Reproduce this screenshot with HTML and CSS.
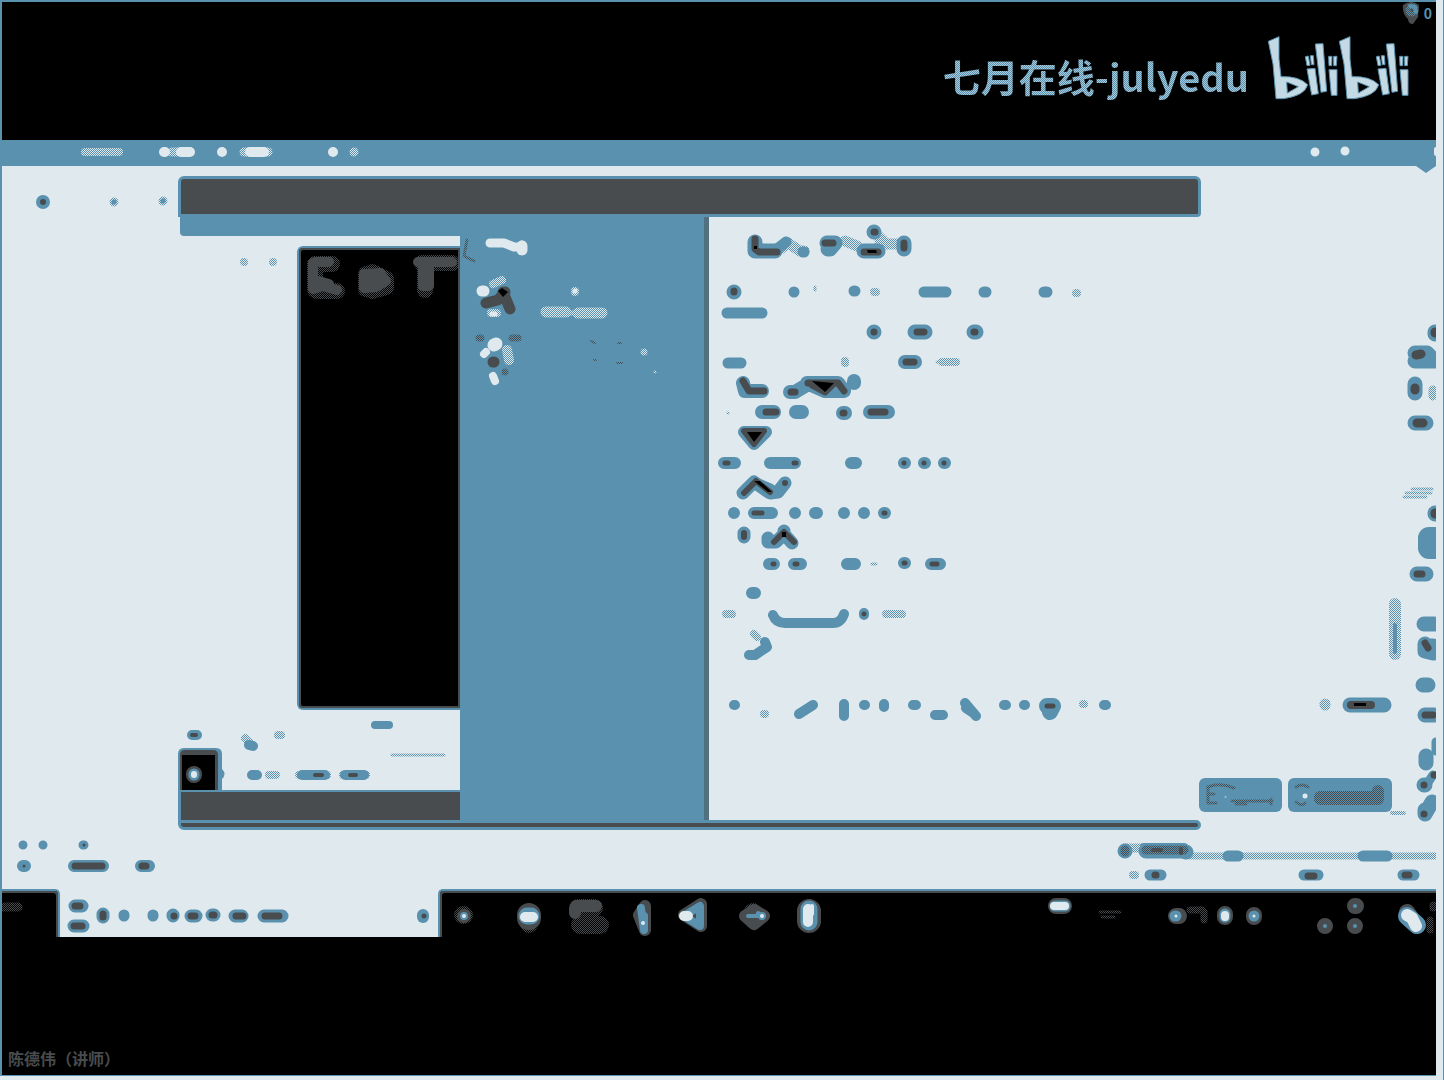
FILE: index.html
```html
<!DOCTYPE html>
<html lang="zh-CN">
<head>
<meta charset="utf-8">
<title>七月在线-julyedu</title>
<link rel="stylesheet" href="styles.css">
</head>
<body>
<svg class="defs" aria-hidden="true">
  <defs>
    <pattern id="dots" width="2" height="2" patternUnits="userSpaceOnUse"><path class="px-blue" d="M0 0h1v1h-1zM1 1h1v1h-1z"/></pattern>
    <pattern id="dots-light" width="2" height="2" patternUnits="userSpaceOnUse"><path class="px-light" d="M0 0h1v1h-1zM1 1h1v1h-1z"/></pattern>
    <pattern id="dots-dark" width="2" height="2" patternUnits="userSpaceOnUse"><path class="px-dark" d="M0 0h1v1h-1zM1 1h1v1h-1z"/></pattern>
  </defs>
</svg>
<div class="frame">
  <header class="header">
    <div class="counter">
      <svg width="18" height="26" viewBox="1400 0 18 26"><path class="fill-dark" d="M1401 5q8-6 16 0l-1 12-5 7q-5 0-5-5-6-5-5-14z"/><circle class="faint" cx="1410" cy="10" r="4" stroke-width="5"/><path class="blue" stroke-width="4" d="M1408 6l5 1 1 5"/></svg>
      <span>0</span>
    </div>
    <div class="brand">
      <h1 class="channel">七月在线-julyedu</h1>
      <svg class="logo" width="147" height="70" viewBox="1020 100 441 210" fill-rule="evenodd">
        <g id="bili">
          <path d="M1030 122L1062 108V175L1068 228Q1122 226 1148 252Q1140 285 1075 294H1053L1044 190ZM1085 244L1087 277L1120 258Z"/>
          <path d="M1146 205L1170 203L1180 279L1160 283ZM1141 168l9-2 5 28-9 1zM1156 165h9l2 27h-8zM1171 130L1194 129L1205 272L1188 275ZM1212 207H1236V284H1219ZM1211 167h10l-1 28h-8zM1226 167h10l-2 28h-8z"/>
        </g>
        <use href="#bili" x="213"/>
      </svg>
    </div>
  </header>

  <nav class="menubar">
    <svg width="300" height="26" viewBox="70 140 300 26">
      <g class="faint-light" stroke-width="8"><path d="M85 152h34"/></g>
      <g class="light" stroke-width="10"><path d="M164 152h1M181 152h9M222 152h0M250 152h14M333 152h0"/></g>
      <g class="faint-light" stroke-width="9"><path d="M172 152h6M354 152h0M244 152h24"/></g>
    </svg>
    <svg width="126" height="26" viewBox="1310 140 126 26">
      <g class="light" stroke-width="9"><path d="M1315 152h0M1345 151h0"/></g><path class="light" stroke-width="4" d="M1436 149v5"/>
      <path class="fill-blue" d="M1416 166h20l-10 7z"/>
    </svg>
  </nav>

  <main class="stage">
    <aside class="gutter">
      <svg width="176" height="60" viewBox="2 176 176 60">
        <path class="blue" stroke-width="14" d="M43 202h0"/><path class="dark" stroke-width="6" d="M43 202h0"/>
        <path class="faint" stroke-width="9" d="M114 202h0M163 201h0"/><path class="blue" stroke-width="5" d="M114 202h0M163 201h0"/>
      </svg>
      <svg width="176" height="59" viewBox="2 830 176 59">
        <g class="blue" stroke-width="9"><path d="M23 845h0M43 845h0M83 845h1"/></g>
        <g class="blue" stroke-width="12"><path d="M23 866h2M74 866h29M141 866h8"/></g>
        <g class="dark" stroke-width="7"><path d="M75 866h27M142 866h4"/></g><g class="dark" stroke-width="3"><path d="M24 866h0M84 845h0"/></g>
      </svg>
    </aside>

    <section class="window">
      <div class="titlebar"></div>
      <div class="panes">
        <div class="pane-left">
          <div class="band"></div>
          <div class="preview-row">
            <svg width="50" height="24" viewBox="230 246 50 24"><path class="faint" stroke-width="8" d="M244 262h0M273 262h0"/></svg>
            <div class="preview">
              <svg width="156" height="56" viewBox="303 250 156 56">
                <g class="faint-dark" stroke-width="16"><path d="M317 264v26M320 264h14M319 291h20M368 274v15M374 272l14 7v8l-14 4M427 266v24M424 263h30"/></g>
                <g class="dark" stroke-width="10"><path d="M315 263v26l10-3 14 4M317 262h14M317 280l14 4M366 274v14l12-1 10-6-6-8-14 1M367 281h16M425 266v20h6v-18M420 262h34"/></g>
              </svg>
            </div>
          </div>
          <svg class="notes" width="282" height="80" viewBox="178 710 282 80">
            <g class="blue" stroke-width="10"><path d="M192 735h5M249 745l4 1M252 775h5M302 775h23M345 775h19"/></g>
            <g class="faint" stroke-width="8"><path d="M278 735h3M245 738l5 5M269 775h7M299 775h28M343 775h23"/></g>
            <path class="blue" stroke-width="8" d="M375 725h14"/>
            <path class="faint" stroke-width="3" d="M392 755h52"/>
            <path class="dark" stroke-width="4" d="M192 735h4M315 775h7M350 775h6"/>
            <path class="fill-blue" d="M178 754q0-6 6-6h32q6 0 6 6v15q5 5 0 10v11H178z"/>
            <path class="fill-dark" d="M180 755q0-5 5-5h28q5 0 5 5v35h-38z"/><path class="fill-black" d="M182 755h33v35h-33z"/>
            <path class="dark" stroke-width="16" d="M194 774v1"/><path class="blue" stroke-width="11" d="M194 774v1"/><path class="light" stroke-width="6" d="M194 774v1"/>
          </svg>
          <div class="dock"></div>
        </div>

        <div class="pane-list">
          <svg width="240" height="170" viewBox="460 220 240 170">
            <path class="faint-dark" stroke-width="3" d="M467 240l-3 16 10 5"/>
            <path class="light" stroke-width="9" d="M490 243l14 0 10 4h8v-2"/><path class="light" stroke-width="11" d="M522 246v4"/>
            <path class="dark" stroke-width="11" d="M486 303l12-3 7-8M503 292l7 17"/><path class="fill-black" d="M498 291l4-3 6 4-5 5z"/>
            <path class="light" stroke-width="11" d="M482 291h2"/><path class="faint-light" stroke-width="8" d="M493 284l9-4M491 313h6M575 291v1"/>
            <path class="light" stroke-width="5" d="M492 314h3M575 291h0"/>
            <path class="faint-light" stroke-width="11" d="M546 312h20M578 313h24"/><path class="faint-light" stroke-width="5" d="M566 313h12"/>
            <path class="faint-dark" stroke-width="7" d="M479 338h2M512 338h6M505 372h0"/><path class="faint-dark" stroke-width="2" d="M591 341l4 2M594 360h2M618 343h3M617 363h5"/>
            <path class="light" stroke-width="13" d="M496 344l-2 1"/><path class="light" stroke-width="8" d="M486 352l-2 2M493 376l2 5"/>
            <path class="faint-light" stroke-width="10" d="M507 350l2 10"/><path class="dark" stroke-width="11" d="M493 362h1"/>
            <path class="faint-light" stroke-width="7" d="M644 352h0"/><path class="faint-light" stroke-width="3" d="M655 372h0"/>
          </svg>
        </div>

        <div class="editor">
          <svg width="412" height="602" viewBox="708 218 412 602">
            <g class="blue" stroke-width="15"><path d="M755 242v9l20 0M827 243h8l-5 6h-2M874 232h0M864 251h14M904 243v6M734 292h0M874 332h0M915 332h10M974 332h2"/></g>
            <g class="faint" stroke-width="11"><path d="M780 249l8-6 12 8h4M845 241l12 5M880 244h20M878 236l6 6"/></g>
            <g class="blue" stroke-width="11"><path d="M777 249l9-7M803 252h1M794 292h0M854 291h1M924 292h22M984 292h2M1044 292h3M727 313h35M728 363h13"/></g>
            <g class="blue" stroke-width="14"><path d="M743 383l2 8h17M790 392h5l10-6M807 383h31l6 8M807 383l18 8 18 0M854 381v2M905 362h10M762 412h12M796 412h6M843 413h2M870 412h18"/></g>
            <g class="blue" stroke-width="12"><path d="M744 432h22l-12 12zM724 463h11M770 463h25M851 463h5M904 463h1M924 463h1M944 463h1M734 513h0M754 513h18M795 513h0M815 513h2M844 513h0M864 513h0M884 513h1M769 564h5M794 564h7M847 564h8M904 563h1M931 564h9M752 593h3"/></g>
            <g class="blue" stroke-width="13"><path d="M743 493l11-11 16 11 8-1 7-9M756 484l14 6M744 533v4M768 538v4h8l8-8 8 9M784 531v4"/></g>
            <g class="blue" stroke-width="10"><path d="M773 615q3 8 12 8h48q8 0 11-9M749 655h6l12-8-2-5M864 613v2M734 705h1M799 714l14-9M844 704v12M864 705h1M884 704v3M913 705h3M935 715h8M965 703l11 13M966 708l6 4M1004 705h2M1024 705h1M1104 705h2"/></g>
            <g class="blue" stroke-width="16"><path d="M1047 706h6l-3 6"/></g>
            <g class="faint" stroke-width="8"><path d="M874 292h2M1076 293h1M794 291v2M845 361v2M942 362h14M726 614h6M886 614h16M754 634l3 3M764 714h1M1083 704h1"/></g>
            <g class="faint" stroke-width="3"><path d="M815 287v3M728 413h0M872 564h4M937 362h3"/></g>
            <g class="dark" stroke-width="7"><path d="M755 239v10l4 3h18M825 243h8M874 232h1M864 252h14M904 243v5M734 291v1M874 332h0M917 332h7M974 332h1M743 381l6 10h15M791 392h4M808 383h30l6 8M812 385l13 7 8-8M906 362h8M766 412h10M843 413h1M871 412h14"/></g>
            <g class="dark" stroke-width="6"><path d="M744 431h20l-10 13zM744 493l12-12 14 11M785 483h0M744 533v4M774 542l10-10 10 10"/></g>
            <g class="dark" stroke-width="5"><path d="M725 463h3M794 463h2M904 463h0M924 463h0M944 463h0M754 513h8M884 513h1M773 564h1M795 564h2M904 563h1M932 564h5M864 614h0M1047 706h6"/></g>
            <g class="fill-black"><path d="M812 381l22 2-9 9zM867 250h9l1 3h-9zM747 432h15l-8 10zM754 481h6l12 11h-4zM782 532h4v5h-4zM754 246h3v3h-3z"/></g>
          </svg>
          <div class="actions">
            <svg width="80" height="20" viewBox="1312 695 80 20"><path class="faint" stroke-width="11" d="M1325 704v1"/><path class="blue" stroke-width="15" d="M1350 705h34"/><path class="dark" stroke-width="8" d="M1351 705h20"/><path class="fill-black" d="M1354 703h12v3h-12z"/></svg>
            <div class="buttons">
              <button class="btn" type="button"><svg width="83" height="34" viewBox="1199 778 83 34"><path class="faint-dark" stroke-width="3" d="M1234 788q-14-6-26-1v16h8M1208 794h6M1232 801h40M1236 804h10M1271 799v5"/><path class="light" stroke-width="1" d="M1225 797h1"/></svg></button>
              <button class="btn" type="button"><svg width="104" height="34" viewBox="1288 778 104 34"><path class="faint-dark" stroke-width="3" d="M1296 787q6-4 12 0M1296 802q5 5 9 1"/><path class="faint-dark" stroke-width="12" d="M1320 797h58v-6M1320 799h58"/><path class="light" stroke-width="5" d="M1305 796h0"/></svg></button>
            </div>
          </div>
          <svg class="rail" width="44" height="602" viewBox="1392 218 44 602">
            <path class="faint" stroke-width="12" d="M1395 604v50"/><path class="blue" stroke-width="4" d="M1395 625v27"/>
            <path class="faint" stroke-width="3" d="M1406 493h25M1412 489h20M1404 497h22"/><path class="faint" stroke-width="9" d="M1433 390v6"/><path class="faint" stroke-width="4" d="M1392 813h12"/>
            <g class="blue" stroke-width="15"><path d="M1435 332v2M1415 353h12l8 8M1415 361h18M1415 384v9M1415 423h11M1435 513v1M1417 574h9M1424 624h10M1425 644v7l8 2M1425 646h8M1423 685h5M1425 715h9M1426 756v7M1424 785h1M1425 810v4l7-12"/></g>
            <path class="blue" stroke-width="22" d="M1429 538v10h6v-10z"/><path class="blue" stroke-width="9" d="M1436 742v9M1433 775l-6 9"/>
            <path class="dark" stroke-width="9" d="M1416 355l5-1M1435 332v1M1435 513v1M1415 388v2M1417 423h6"/><path class="dark" stroke-width="7" d="M1417 574h5M1425 643l3 5M1425 715h8M1424 785h0M1424 814h0M1434 775h2"/>
          </svg>
        </div>
      </div>
      <div class="sill"></div>
      <svg class="status" width="320" height="59" viewBox="1116 830 320 59">
        <path class="faint" stroke-width="7" d="M1190 856h246"/>
        <path class="blue" stroke-width="15" d="M1125 851h0M1146 851h36l4 1"/><path class="faint" stroke-width="9" d="M1124 848h24"/><path class="blue" stroke-width="8" d="M1144 847h40"/>
        <path class="blue" stroke-width="11" d="M1228 856h10M1363 856h24M1150 875h11M1304 875h14M1403 875h11"/>
        <path class="faint-dark" stroke-width="9" d="M1125 850v2M1146 850h38"/><path class="dark" stroke-width="4" d="M1153 850h8M1181 849v4"/>
        <path class="faint" stroke-width="8" d="M1133 875h2"/><path class="dark" stroke-width="7" d="M1155 875h1M1308 876h6M1405 875h4"/>
      </svg>
    </section>
  </main>

  <footer class="taskbar">
    <div class="start"><svg width="24" height="20" viewBox="2 897 24 20"><path class="faint-dark" stroke-width="9" d="M4 907h14"/></svg></div>
    <div class="search">
      <svg width="250" height="46" viewBox="60 891 250 46">
        <g class="blue" stroke-width="13"><path d="M75 906h7M74 926h9M103 914v3M173 915v1M191 916h5M212 915h2M235 916h7M264 916h18"/></g>
        <g class="blue" stroke-width="11"><path d="M124 915v1M153 915v1"/></g>
        <g class="dark" stroke-width="7"><path d="M75 906h5M74 926h8M103 914v3M174 916h0M191 916h4M212 915h2M236 916h7M265 916h14"/></g>
      </svg>
      <svg width="30" height="46" viewBox="408 891 30 46"><path class="blue" stroke-width="12" d="M423 915v2"/><path class="dark" stroke-width="5" d="M424 916h0"/></svg>
    </div>
    <div class="tasks">
      <svg width="400" height="44" viewBox="442 893 400 44">
        <path class="faint-dark" stroke-width="18" d="M463 915h1M529 916v8M578 908h16M580 925h20M753 912v8"/>
        <path class="dark" stroke-width="12" d="M576 906h20M575 909v4M639 915l6-9v24zM684 915l17-11v22zM745 916l9-6 10 6-10 8z"/>
        <path class="dark" stroke-width="24" d="M529 915v3M809 911v10"/><path class="dark" stroke-width="14" d="M464 916h0"/>
        <path class="blue" stroke-width="8" d="M464 916h0M641 908l3 22v-14M684 916l16-10v20zM762 916h0"/><path class="blue" stroke-width="4" d="M748 916h15l-5-3"/>
        <path class="blue" stroke-width="17" d="M527 916h4M809 909v13"/>
        <path class="light" stroke-width="10" d="M525 917h8M808 909v13M684 916h4"/><path class="light" stroke-width="4" d="M643 923h0M464 916h0M762 916h0M812 906v8"/>
      </svg>
      <svg width="396" height="44" viewBox="1040 893 396 44">
        <path class="dark" stroke-width="16" d="M1056 906h8M1176 916h3M1225 914v3M1254 915v2M1355 906h1M1325 926h0M1355 926h0M1407 912l10 14"/>
        <path class="faint-dark" stroke-width="7" d="M1204 912v8M1190 910h12M1433 905v3M1430 920v10"/><path class="faint-dark" stroke-width="3" d="M1100 912h20M1102 917h12"/>
        <path class="blue" stroke-width="11" d="M1055 906h10M1175 916h1M1225 914v3M1254 916h0"/><path class="blue" stroke-width="4" d="M1355 906h0M1325 926h0M1355 926h0"/><path class="blue" stroke-width="18" d="M1407 916l10 9"/>
        <path class="light" stroke-width="8" d="M1054 906h11M1225 915v2"/><path class="light" stroke-width="12" d="M1407 915l5 3 4 8"/><path class="light" stroke-width="3" d="M1176 916h0M1254 916h0"/>
      </svg>
    </div>
  </footer>

  <div class="speaker">陈德伟（讲师）</div>
</div>
</body>
</html>
```

FILE: styles.css
```css
:root {
  --black: #000000;
  --dark: #484c4e;
  --blue: #5991ae;
  --light: #e0e9ee;
}

* { box-sizing: border-box; }

body {
  margin: 0;
  min-height: 100vh;
  display: flex;
  padding: 0 7px 4px 0;
  border-right: 1px solid var(--blue);
  background: var(--light);
  font-family: "Noto Sans CJK SC", "Noto Sans", sans-serif;
}

svg { display: block; flex: none; overflow: visible; }
.defs { position: absolute; width: 0; height: 0; }

/* soft marks: round strokes in the four palette tones */
.blue, .dark, .light, .faint, .faint-light, .faint-dark {
  fill: none;
  stroke-linecap: round;
  stroke-linejoin: round;
}
.blue { stroke: var(--blue); }
.dark { stroke: var(--dark); }
.light { stroke: var(--light); }
.faint { stroke: url(#dots) var(--blue); }
.faint-light { stroke: url(#dots-light) var(--light); }
.faint-dark { stroke: url(#dots-dark) var(--dark); }
.fill-blue, .px-blue { fill: var(--blue); }
.fill-dark, .px-dark { fill: var(--dark); }
.fill-black { fill: var(--black); }
.px-light { fill: var(--light); }

.frame {
  flex: 1;
  min-width: 0;
  display: flex;
  flex-direction: column;
  overflow: hidden;
  border-left: 2px solid var(--blue);
  border-bottom: 1px solid var(--blue);
  background: var(--light);
}

.header {
  height: 140px;
  border-top: 2px solid var(--blue);
  background: var(--black);
}
.counter {
  display: flex;
  align-items: center;
  justify-content: flex-end;
  gap: 4px;
  height: 22px;
  padding-right: 4px;
  color: var(--blue);
  font-size: 14px;
  font-weight: 700;
  line-height: 22px;
}
.brand {
  display: flex;
  align-items: flex-end;
  justify-content: flex-end;
  gap: 16px;
  height: 80px;
  padding-right: 24px;
}
.channel {
  margin: 0;
  font-size: 38px;
  font-weight: 700;
  line-height: 56px;
  color: transparent;
  background: repeating-conic-gradient(var(--blue) 0 25%, #a9cadb 0 50%) 0 0 / 2px 2px;
  -webkit-background-clip: text;
  background-clip: text;
}
.logo { fill: #c3d9e4; stroke: var(--blue); stroke-width: 3; }

.menubar {
  display: flex;
  justify-content: space-between;
  height: 26px;
  padding-left: 68px;
  background: var(--blue);
}

.stage { display: flex; padding-top: 10px; }
.gutter {
  width: 176px;
  flex: none;
  display: flex;
  flex-direction: column;
  justify-content: space-between;
}
.window { flex: 1; min-width: 0; display: flex; flex-direction: column; }
.titlebar {
  height: 41px;
  width: 1023px;
  max-width: 100%;
  border: 3px solid var(--blue);
  border-radius: 6px 6px 4px 0;
  background: var(--dark);
}
.panes { display: flex; }
.pane-left { width: 282px; flex: none; display: flex; flex-direction: column; }
.band { height: 19px; margin-left: 2px; background: var(--blue); border-bottom-left-radius: 4px; }
.preview-row { display: flex; justify-content: flex-end; gap: 17px; padding-top: 10px; }
.preview {
  width: 163px;
  height: 464px;
  border: 2px solid var(--blue);
  border-right: 0;
  border-radius: 6px 0 0 6px;
  background: var(--black);
  box-shadow: inset 0 0 0 2px var(--dark);
  padding: 2px 0 0 2px;
}
.dock {
  height: 30px;
  border-left: 3px solid var(--blue);
  border-top: 2px solid var(--blue);
  background: var(--dark);
}
.pane-list {
  width: 249px;
  flex: none;
  padding-top: 3px;
  background: var(--blue);
  box-shadow: inset -8px 0 0 -3px #517080, inset -5px 0 0 0 var(--blue);
}
.editor {
  flex: 1;
  min-width: 0;
  display: flex;
  justify-content: space-between;
  margin-left: -1px;
  padding-top: 1px;
}
.actions {
  display: flex;
  flex-direction: column;
  align-items: flex-end;
  justify-content: flex-end;
  gap: 63px;
  flex: 1;
  padding-bottom: 8px;
}
.buttons { display: flex; gap: 6px; }
.btn {
  border: 0;
  padding: 0;
  border-radius: 6px;
  background: var(--blue);
}
.sill {
  height: 10px;
  width: 1023px;
  max-width: 100%;
  border: 3px solid var(--blue);
  border-radius: 0 5px 5px 6px;
  background: var(--dark);
}
.status { align-self: flex-end; }

.taskbar {
  display: flex;
  height: 48px;
  background: linear-gradient(var(--light) 0 8px, var(--black) 8px);
}
.start {
  width: 58px;
  padding-top: 6px;
  border-top: 2px solid var(--blue);
  border-right: 2px solid var(--blue);
  border-top-right-radius: 5px;
  box-shadow: inset -2px 2px 0 var(--dark);
  background: var(--black);
}
.search {
  width: 378px;
  display: flex;
  justify-content: space-between;
  padding-top: 2px;
  background: var(--light);
}
.tasks {
  flex: 1;
  min-width: 0;
  display: flex;
  justify-content: space-between;
  padding-top: 2px;
  padding-left: 2px;
  border-top: 2px solid var(--blue);
  border-left: 2px solid var(--blue);
  border-top-left-radius: 5px;
  box-shadow: inset 2px 2px 0 var(--dark);
  background: var(--black);
}

.speaker {
  flex: 1;
  display: flex;
  align-items: flex-end;
  padding: 0 6px 5px;
  background: var(--black);
  color: var(--dark);
  font-size: 16px;
  font-weight: 700;
  line-height: 24px;
}
```
